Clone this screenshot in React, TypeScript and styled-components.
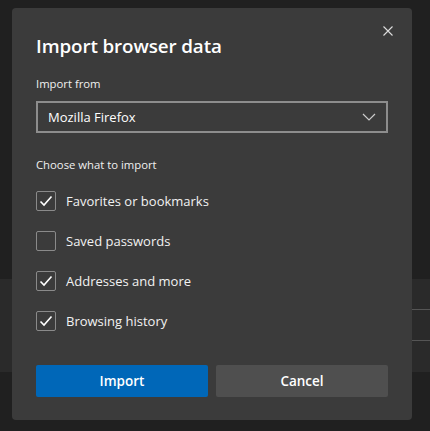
import styled, { createGlobalStyle } from "styled-components";

const GlobalStyle = createGlobalStyle`
  html, body {
    margin: 0;
    padding: 0;
    background: #202020;
  }
  body {
    font-family: "Open Sans", "Noto Sans", sans-serif;
  }
`;

const Page = styled.div`
  position: relative;
  width: 430px;
  height: 431px;
  overflow: hidden;
  background: #202020;
  padding-top: 279px;
  box-sizing: border-box;
`;

const Band = styled.div`
  height: 93px;
  background: #2a2a2a;
`;

const BandRow = styled.div`
  height: 30px;
  border-bottom: 1px solid #555;
  margin-left: 300px;
`;

const Dialog = styled.div`
  position: absolute;
  left: 12px;
  top: 8px;
  width: 400px;
  height: 412px;
  box-sizing: border-box;
  background: #3b3b3b;
  border-radius: 4px;
  padding: 24px 24px 0;
  color: #fff;
`;

const Close = styled.button`
  position: absolute;
  top: 11px;
  right: 12px;
  width: 24px;
  height: 24px;
  padding: 0;
  border: 0;
  background: transparent;
  display: flex;
  align-items: center;
  justify-content: center;
`;

const Title = styled.h1`
  margin: 0;
  font-size: 18.8px;
  font-weight: 600;
  line-height: 28px;
  letter-spacing: -0.1px;
`;

const Label = styled.div<{ $top: number }>`
  margin-top: ${(p) => p.$top}px;
  font-size: 11.3px;
  line-height: 16px;
  color: #f0f0f0;
`;

const Select = styled.div`
  margin-top: 9px;
  height: 32px;
  box-sizing: border-box;
  border: 2px solid #8d8d8d;
  display: flex;
  align-items: center;
  justify-content: space-between;
  padding: 0 10px 0 10px;
  font-size: 13px;
  color: #fff;
`;

const Options = styled.div`
  margin-top: 8px;
  display: flex;
  flex-direction: column;
`;

const Option = styled.label`
  height: 40px;
  display: flex;
  align-items: center;
  gap: 10px;
  font-size: 13px;
  color: #f2f2f2;
`;

const Box = styled.span`
  width: 20px;
  height: 20px;
  box-sizing: border-box;
  border: 1px solid #8a8a8a;
  border-radius: 2px;
  display: flex;
  align-items: center;
  justify-content: center;
`;

const Buttons = styled.div`
  margin-top: 24px;
  display: grid;
  grid-template-columns: 1fr 1fr;
  gap: 8px;
`;

const Button = styled.button<{ $primary?: boolean }>`
  height: 32px;
  border: 0;
  border-radius: 2px;
  background: ${(p) => (p.$primary ? "#0067b8" : "#4f4f4f")};
  color: #fff;
  font-family: inherit;
  font-size: 13.5px;
  font-weight: 600;
`;

const items = [
  { label: "Favorites or bookmarks", checked: true },
  { label: "Saved passwords", checked: false },
  { label: "Addresses and more", checked: true },
  { label: "Browsing history", checked: true },
];

function Check() {
  return (
    <svg width="14" height="12" viewBox="0 0 14 12" fill="none">
      <path d="M1.5 6.5 L5 10 L12.5 1.5" stroke="#fff" strokeWidth="1.6" />
    </svg>
  );
}

export default function App() {
  return (
    <Page>
      <GlobalStyle />
      <Band>
        <BandRow />
        <BandRow />
      </Band>
      <Dialog>
        <Close aria-label="Close">
          <svg width="10" height="10" viewBox="0 0 10 10">
            <path d="M0.5 0.5 L9.5 9.5 M9.5 0.5 L0.5 9.5" stroke="#ddd" strokeWidth="1.1" />
          </svg>
        </Close>
        <Title>Import browser data</Title>
        <Label $top={16}>Import from</Label>
        <Select>
          <span>Mozilla Firefox</span>
          <svg width="14" height="8" viewBox="0 0 14 8" fill="none">
            <path d="M1 1 L7 7 L13 1" stroke="#ccc" strokeWidth="1.2" />
          </svg>
        </Select>
        <Label $top={24}>Choose what to import</Label>
        <Options>
          {items.map((it) => (
            <Option key={it.label}>
              <Box>{it.checked && <Check />}</Box>
              {it.label}
            </Option>
          ))}
        </Options>
        <Buttons>
          <Button $primary>Import</Button>
          <Button>Cancel</Button>
        </Buttons>
      </Dialog>
    </Page>
  );
}
